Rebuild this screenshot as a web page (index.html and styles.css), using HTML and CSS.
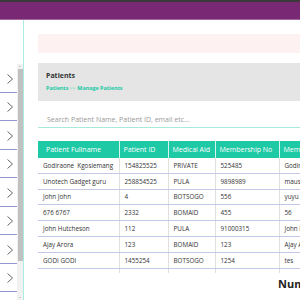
FILE: index.html
```html
<!DOCTYPE html>
<html>
<head>
<meta charset="utf-8">
<link rel="stylesheet" href="styles.css">
</head>
<body>
<div class="topbar"></div>
<div class="layout">
  <aside class="sidebar">
    <div class="side-head"></div>
    <div class="side-scroll">
      <ul class="side-list">
        <li class="side-item"><svg class="chev" viewBox="0 0 6 10"><polyline points="0.5,0.5 5.5,5 0.5,9.5"/></svg></li>
        <li class="side-item"><svg class="chev" viewBox="0 0 6 10"><polyline points="0.5,0.5 5.5,5 0.5,9.5"/></svg></li>
        <li class="side-item"><svg class="chev" viewBox="0 0 6 10"><polyline points="0.5,0.5 5.5,5 0.5,9.5"/></svg></li>
        <li class="side-item"><svg class="chev" viewBox="0 0 6 10"><polyline points="0.5,0.5 5.5,5 0.5,9.5"/></svg></li>
        <li class="side-item"><svg class="chev" viewBox="0 0 6 10"><polyline points="0.5,0.5 5.5,5 0.5,9.5"/></svg></li>
        <li class="side-item"><svg class="chev" viewBox="0 0 6 10"><polyline points="0.5,0.5 5.5,5 0.5,9.5"/></svg></li>
        <li class="side-item"><svg class="chev" viewBox="0 0 6 10"><polyline points="0.5,0.5 5.5,5 0.5,9.5"/></svg></li>
        <li class="side-item"><svg class="chev" viewBox="0 0 6 10"><polyline points="0.5,0.5 5.5,5 0.5,9.5"/></svg></li>
      </ul>
      <div class="scrollbar">
        <div class="sb-arrow up"></div>
        <div class="sb-thumb"></div>
        <div class="sb-track"></div>
        <div class="sb-arrow down"></div>
      </div>
    </div>
  </aside>
  <main class="main">
    <div class="inner">
      <div class="alert"></div>
      <div class="panel">
        <div class="panel-title">Patients</div>
        <div class="crumbs">Patients <span class="sep">&gt;&gt;</span> Manage Patients</div>
      </div>
      <div class="search">Search Patient Name, Patient ID, email etc...</div>
      <table class="grid">
        <thead>
          <tr><th class="c1">Patient Fullname</th><th class="c2">Patient ID</th><th class="c3">Medical Aid</th><th class="c4">Membership No</th><th class="c5">Member Name</th></tr>
        </thead>
        <tbody>
          <tr><td>Godiraone&nbsp; Kgosiemang</td><td>154825525</td><td>PRIVATE</td><td>525485</td><td>Godiraone</td></tr>
          <tr><td>Unotech Gadget guru</td><td>258854525</td><td>PULA</td><td>9898989</td><td>maus</td></tr>
          <tr><td>John John</td><td>4</td><td>BOTSOGO</td><td>556</td><td>yuyu</td></tr>
          <tr><td>676 6767</td><td>2332</td><td>BOMAID</td><td>455</td><td>56</td></tr>
          <tr><td>John Hutcheson</td><td>112</td><td>PULA</td><td>91000315</td><td>John Hutcheson</td></tr>
          <tr><td>Ajay Arora</td><td>123</td><td>BOMAID</td><td>123</td><td>Ajay Arora</td></tr>
          <tr><td>GODI GODI</td><td>1455254</td><td>BOTSOGO</td><td>1254</td><td>tes</td></tr>
          <tr class="tail"><td></td><td></td><td></td><td></td><td></td></tr>
        </tbody>
      </table>
      <h3 class="count">Number of Patients</h3>
    </div>
  </main>
</div>
</body>
</html>
```
FILE: styles.css
```css
* { box-sizing: border-box; }
html, body { margin: 0; padding: 0; }
body {
  width: 300px;
  height: 300px;
  overflow: hidden;
  background: #fff;
  font-family: "Open Sans", "DejaVu Sans", sans-serif;
  color: #333;
}
.topbar {
  height: 20px;
  background: #792874;
  border-top: 2px solid #3a3a3a;
  border-bottom: 1px solid #a266a0;
}
.layout {
  display: flex;
  height: 280px;
}
.sidebar {
  width: 24px;
  flex: none;
  border-right: 1px solid #a9ede3;
  display: flex;
  flex-direction: column;
}
.side-head { height: 44px; flex: none; }
.side-scroll {
  flex: 1;
  display: flex;
  overflow: hidden;
}
.side-list {
  list-style: none;
  margin: 0;
  padding: 0;
  width: 17px;
  flex: none;
}
.side-item {
  height: 28.5px;
  border-bottom: 1px solid #9098cc;
  display: flex;
  align-items: center;
  padding-left: 7px;
  padding-top: 2px;
}
.chev {
  width: 6px;
  height: 10px;
  fill: none;
  stroke: #666;
  stroke-width: 1;
}
.scrollbar {
  width: 6px;
  flex: none;
  background: #f1f1f1;
  display: flex;
  flex-direction: column;
  align-items: center;
}
.sb-arrow {
  height: 5px;
  width: 6px;
  flex: none;
  position: relative;
}
.sb-arrow::after {
  content: "";
  position: absolute;
  left: 2px;
  top: 2px;
  border-left: 1px solid transparent;
  border-right: 1px solid transparent;
}
.sb-arrow.up::after { border-bottom: 1.5px solid #a3a3a3; }
.sb-arrow.down::after { border-top: 1.5px solid #a3a3a3; }
.sb-thumb {
  width: 5px;
  height: 192px;
  background: #c1c1c1;
  flex: none;
}
.sb-track { flex: 1; }
.main {
  flex: 1;
  overflow: hidden;
  padding-left: 14px;
}
.inner {
  width: 420px;
}
.alert {
  margin-top: 14px;
  height: 19px;
  background: #fdf1f1;
}
.panel {
  margin-top: 10px;
  height: 38px;
  background: #e5e5e5;
  padding: 8px 8px 0;
}
.panel-title {
  font-size: 7px;
  font-weight: 700;
  color: #333;
  line-height: 10px;
}
.crumbs {
  margin-top: 3px;
  font-size: 5.4px;
  font-weight: 700;
  color: #20c9a4;
  line-height: 8px;
}
.crumbs .sep { color: #8fe0cc; }
.search {
  margin-top: 7px;
  height: 20px;
  border-bottom: 1.5px solid #a7eadb;
  font-size: 7px;
  color: #9a9a9a;
  padding: 7px 0 0 9px;
  line-height: 9px;
}
.grid {
  margin-top: 12.5px;
  border-collapse: collapse;
  table-layout: fixed;
  width: 340px;
}
.grid th {
  background: #1ec9a6;
  color: #fff;
  font-weight: 400;
  font-size: 7px;
  text-align: left;
  height: 17px;
  padding: 0 4px;
  border-left: 1px solid #d6f5ee;
  white-space: nowrap;
  overflow: hidden;
}
.grid th.c1 { width: 81px; padding-left: 8px; border-left: none; }
.grid th.c2 { width: 49px; }
.grid th.c3 { width: 47px; }
.grid th.c4 { width: 64px; }
.grid td {
  font-size: 6.3px;
  color: #333;
  height: 15.8px;
  padding: 0 4px 0 5px;
  border-left: 1px solid #e0e0e0;
  border-bottom: 1.5px solid #c3c8e6;
  white-space: nowrap;
  overflow: hidden;
}
.grid td:first-child { border-left: none; padding-left: 5px; }
.grid tr.tail td { height: 5px; border-bottom: none; }
.count {
  margin: 3px 0 0 240px;
  font-size: 11px;
  font-weight: 700;
  color: #222;
}
```
